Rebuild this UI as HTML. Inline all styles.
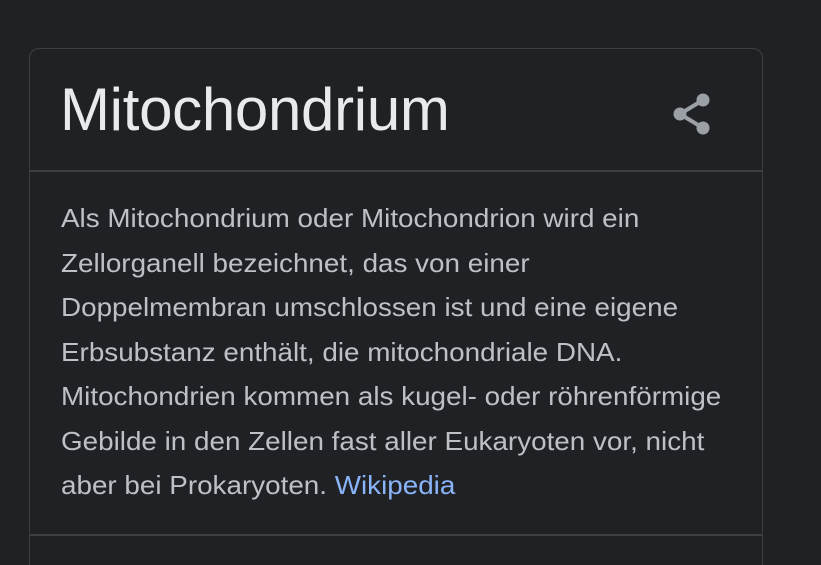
<!DOCTYPE html>
<html><head><meta charset="utf-8"><style>
html,body{margin:0;padding:0;background:#202124;width:821px;height:565px;overflow:hidden;font-family:"Liberation Sans",Arial,sans-serif;position:relative}
.card{position:absolute;left:29px;top:48px;width:734px;height:540px;border:1px solid #3c4043;border-radius:10px;box-sizing:border-box}
.t{position:absolute;left:60px;top:76px;font-size:60px;line-height:68px;color:#e8eaed;letter-spacing:-0.3px}
.d1{position:absolute;left:30px;top:170px;width:732px;height:2px;background:#3c4043}
.d2{position:absolute;left:30px;top:534px;width:732px;height:2px;background:#3c4043}
.p{position:absolute;left:61px;top:196px;font-size:26px;line-height:44.5px;color:#bdc1c6;white-space:nowrap;transform:scaleX(1.07);transform-origin:0 0}
.p a{color:#8ab4f8;text-decoration:none}
svg{position:absolute;left:668px;top:90px}
</style></head><body>
<div class="card"></div>
<div class="t">Mitochondrium</div>
<svg width="50" height="50" viewBox="0 0 50 50"><g fill="#9aa0a6" stroke="#9aa0a6"><line x1="35" y1="10" x2="12" y2="24" stroke-width="4"/><line x1="12" y1="24" x2="35" y2="38" stroke-width="4"/><circle cx="35" cy="10" r="6.5" stroke="none"/><circle cx="12" cy="24" r="6.5" stroke="none"/><circle cx="35" cy="38" r="6.5" stroke="none"/></g></svg>
<div class="d1"></div>
<div class="p">Als Mitochondrium oder Mitochondrion wird ein<br>Zellorganell bezeichnet, das von einer<br>Doppelmembran umschlossen ist und eine eigene<br>Erbsubstanz enthält, die mitochondriale DNA.<br>Mitochondrien kommen als kugel- oder röhrenförmige<br>Gebilde in den Zellen fast aller Eukaryoten vor, nicht<br>aber bei Prokaryoten. <a>Wikipedia</a></div>
<div class="d2"></div>
</body></html>
